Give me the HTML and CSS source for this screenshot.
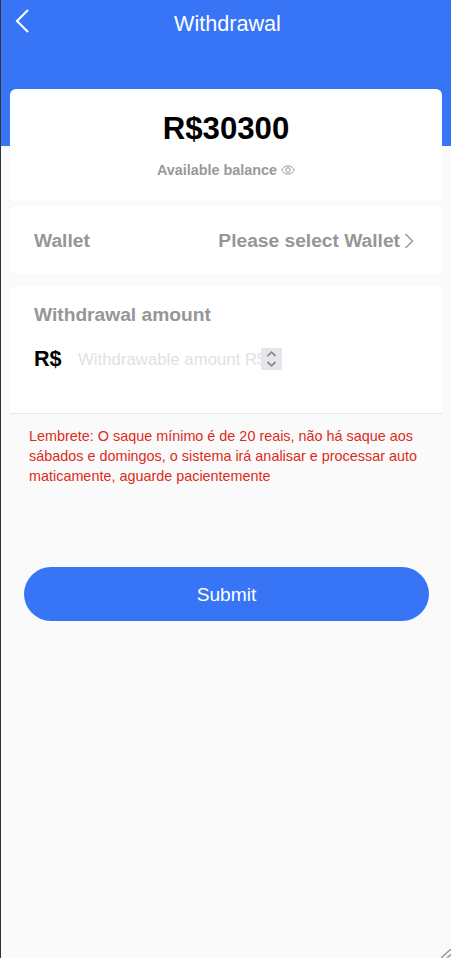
FILE: index.html
```
<!DOCTYPE html>
<html lang="en">
<head>
<meta charset="utf-8">
<meta name="viewport" content="width=device-width, initial-scale=1.0">
<title>Withdrawal</title>
<link rel="stylesheet" href="styles.css">
</head>
<body>
<div class="page">
  <header class="header">
    <a class="back" href="#" aria-label="Back">
      <svg width="14" height="24" viewBox="0 0 14 24"><path d="M13 1L2 12L13 23" fill="none" stroke="#fff" stroke-width="2.1"/></svg>
    </a>
    <h1 class="title">Withdrawal</h1>
  </header>

  <main class="content">
    <section class="card balance">
      <div class="balance-num">R$30300</div>
      <div class="balance-label">
        <span>Available balance</span>
        <svg class="eye" width="14" height="10" viewBox="0 0 14 10" fill="none" stroke="#999"><path d="M.6 5C3.6-.5 10.4-.5 13.4 5C10.4 10.5 3.6 10.5.6 5Z"/><circle cx="7" cy="5" r="2.3"/></svg>
      </div>
    </section>

    <section class="card wallet">
      <span>Wallet</span>
      <span class="wallet-select">Please select Wallet
        <svg width="10" height="16" viewBox="0 0 10 16"><path d="M1.5 1L8.5 8L1.5 15" fill="none" stroke="#969696" stroke-width="1.4"/></svg>
      </span>
    </section>

    <section class="card amount">
      <h2 class="amount-title">Withdrawal amount</h2>
      <div class="amount-row">
        <label class="currency" for="amount">R$</label>
        <div class="field">
          <input id="amount" class="amount-input" type="text" inputmode="numeric" placeholder="Withdrawable amount R$30300">
          <span class="spinner">
            <svg width="21" height="22" viewBox="0 0 21 22" fill="none" stroke="#8b8b90" stroke-width="1.8"><path d="M6.5 8L10.5 4.2L14.5 8M6.5 14L10.5 17.8L14.5 14"/></svg>
          </span>
        </div>
      </div>
    </section>

    <p class="tip">Lembrete: O saque mínimo é de 20 reais, não há saque aos<br>sábados e domingos, o sistema irá analisar e processar auto<br>maticamente, aguarde pacientemente</p>

    <button class="submit" type="button">Submit</button>
  </main>

  <svg class="grip" width="10" height="10" viewBox="0 0 10 10" stroke="#999" stroke-width="1.5"><path d="M0 10L10 1M6 10L10 6.4"/></svg>
</div>
</body>
</html>
```

FILE: styles.css
```
* {
  box-sizing: border-box;
}

body {
  margin: 0;
  font-family: "Liberation Sans", Arial, sans-serif;
  background-color: #fafafa;
}

.page {
  position: relative;
  height: 958px;
  border-left: 1px solid #333439;
  overflow: hidden;
}

.header {
  display: flex;
  height: 146px;
  padding: 9px 15px 0 14px;
  background-color: #3875f6;
}

.back {
  width: 14px;
  height: 24px;
}

.back svg {
  display: block;
}

.title {
  flex: 1;
  margin: 1px 10px 0 0;
  font-size: 21.6px;
  font-weight: normal;
  line-height: 28px;
  text-align: center;
  color: #fff;
}

.content {
  margin-top: -57px;
  padding: 0 9px;
}

.card {
  background-color: #fff;
  border-radius: 6px;
}

.balance {
  height: 112px;
  padding-top: 21px;
  text-align: center;
}

.balance-num {
  font-size: 31.2px;
  font-weight: bold;
  line-height: 38px;
  color: #000;
}

.balance-label {
  display: flex;
  align-items: center;
  justify-content: center;
  gap: 4px;
  margin-top: 12px;
  font-size: 14.4px;
  font-weight: bold;
  line-height: 20px;
  color: #999;
}

.wallet {
  display: flex;
  align-items: center;
  justify-content: space-between;
  height: 68px;
  margin-top: 5px;
  padding: 1px 28px 0 24px;
  font-size: 19.2px;
  font-weight: bold;
  color: #969696;
}

.wallet-select {
  display: flex;
  align-items: center;
  gap: 4px;
}

.amount {
  height: 128px;
  margin-top: 12px;
  padding: 17px 24px 0;
  border-bottom: 1px solid #e8e8e8;
  border-radius: 6px 6px 0 0;
}

.amount-title {
  margin: 0;
  font-size: 19.2px;
  line-height: 24px;
  color: #969696;
}

.amount-row {
  display: flex;
  align-items: center;
  margin-top: 18px;
  height: 28px;
}

.currency {
  width: 44px;
  font-size: 21.6px;
  font-weight: bold;
  color: #000;
}

.field {
  display: flex;
  align-items: center;
  width: 204px;
}

.amount-input {
  flex: 1;
  min-width: 0;
  height: 24px;
  padding: 1px 0 0;
  border: none;
  outline: none;
  background: none;
  font-family: inherit;
  font-size: 16.8px;
}

.amount-input::placeholder {
  color: #e1e1e3;
}

.spinner {
  width: 21px;
  height: 22px;
  background-color: #e6e6ea;
}

.spinner svg {
  display: block;
}

.tip {
  margin: 12px 0 0;
  padding: 0 19px;
  font-size: 14.4px;
  line-height: 20px;
  white-space: nowrap;
  color: #db2c20;
}

.submit {
  display: block;
  width: 405px;
  height: 54px;
  margin: 81px 0 0 14px;
  padding: 2px 0 0;
  border: none;
  border-radius: 27px;
  background-color: #3875f6;
  font-family: inherit;
  font-size: 19.2px;
  color: #fff;
  cursor: pointer;
}

/* resize handle in the window corner */
.grip {
  position: absolute;
  right: 0;
  bottom: 0;
}
```
